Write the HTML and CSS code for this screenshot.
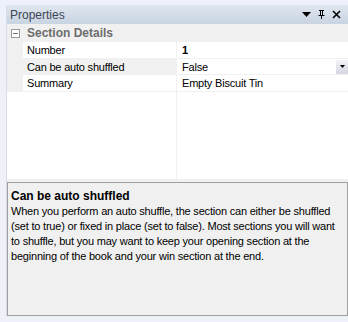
FILE: index.html
```html
<!DOCTYPE html>
<html lang="en">
<head>
    <meta charset="UTF-8">
    <title>Properties</title>
    <link rel="stylesheet" href="styles.css">
</head>
<body>
    <div class="panel">
        <div class="titlebar">
            <span class="title">Properties</span>
            <div class="tools">
                <svg width="9" height="9" viewBox="0 0 9 9"><path d="M0 2 H9 L4.5 7 Z" fill="#000"/></svg>
                <svg width="9" height="9" viewBox="0 0 9 9"><path d="M2 0 H7 V1 H6 V5 H7.5 V6 H5 V9 H4 V6 H1.5 V5 H3 V1 H2 Z M4 1 V5 H5 V1 Z" fill="#000"/></svg>
                <svg width="9" height="9" viewBox="0 0 9 9"><path d="M1 1 L8 8 M8 1 L1 8" stroke="#000" stroke-width="1.6"/></svg>
            </div>
        </div>

        <div class="grid">
            <div class="category">
                <span class="toggle"></span>
                <span>Section Details</span>
            </div>
            <div class="row">
                <div class="name">Number</div>
                <div class="value bold">1</div>
            </div>
            <div class="row selected">
                <div class="name">Can be auto shuffled</div>
                <div class="value">False<span class="drop"><svg width="5" height="3" viewBox="0 0 5 3"><path d="M0 0 H5 L2.5 3 Z" fill="#000"/></svg></span></div>
            </div>
            <div class="row">
                <div class="name">Summary</div>
                <div class="value">Empty Biscuit Tin</div>
            </div>
            <div class="rest">
                <div class="rest-name"></div>
                <div class="rest-value"></div>
            </div>
        </div>

        <div class="help">
            <div class="help-title">Can be auto shuffled</div>
            <p>When you perform an auto shuffle, the section can either be shuffled (set to true) or fixed in place (set to false). Most sections you will want to shuffle, but you may want to keep your opening section at the beginning of the book and your win section at the end.</p>
        </div>
    </div>
</body>
</html>
```

FILE: styles.css
```css
* {
    margin: 0;
    padding: 0;
    box-sizing: border-box;
}

body {
    background-color: #eef0fa;
    font-family: 'Liberation Sans', Arial, sans-serif;
    font-size: 11px;
    letter-spacing: -0.2px;
    color: #000;
    width: 348px;
    height: 322px;
    overflow: hidden;
}

.panel {
    margin: 5px 0 0 6px;
    height: 312px;
    display: flex;
    flex-direction: column;
    border-left: 1px solid #d8dce8;
    background-color: #f0f0f0;
}

.titlebar {
    height: 19px;
    display: flex;
    align-items: center;
    justify-content: space-between;
    padding: 0 7px 0 3px;
    background: linear-gradient(#dfe6ef, #c9d4e2);
}

.title {
    font-size: 12px;
    letter-spacing: 0;
    color: #3c4654;
}

.tools {
    display: flex;
    gap: 6px;
    align-items: center;
}

.grid {
    background-color: #fff;
    height: 155px;
    display: flex;
    flex-direction: column;
}

.category {
    height: 18px;
    background-color: #f0f0f0;
    display: flex;
    align-items: center;
    gap: 7px;
    padding-left: 4px;
    font-weight: bold;
    font-size: 12px;
    letter-spacing: 0;
    color: #6d6d6d;
}

.toggle {
    width: 9px;
    height: 9px;
    border: 1px solid #999;
    background: linear-gradient(#777, #777) center / 5px 1px no-repeat, #fff;
}

.row {
    display: flex;
    height: 16.5px;
    border-bottom: 1px solid #f0f0f0;
    padding-left: 16px;
    background-color: #f0f0f0;
}

.name {
    width: 154px;
    background-color: #fff;
    padding-left: 4px;
    line-height: 16px;
    border-right: 1px solid #f0f0f0;
}

.value {
    flex: 1;
    background-color: #fff;
    padding-left: 5px;
    line-height: 16px;
    display: flex;
    justify-content: space-between;
}

.selected .name {
    background-color: #f0f0f0;
}

.bold {
    font-weight: bold;
}

.drop {
    width: 12px;
    height: 14px;
    margin-top: 1px;
    display: flex;
    align-items: center;
    justify-content: center;
    background: linear-gradient(#f2f2f6, #d4d6e0);
}

.rest {
    flex: 1;
    display: flex;
}

.rest-name {
    width: 170px;
    border-right: 1px solid #f0f0f0;
}

.help {
    margin: 3px 0 1px 0;
    flex: 1;
    border: 1px solid #a0a0a0;
    padding: 6px 3px 4px;
}

.help-title {
    font-weight: bold;
    font-size: 12px;
    letter-spacing: 0;
    line-height: 15px;
}

.help p {
    line-height: 15px;
}
```
